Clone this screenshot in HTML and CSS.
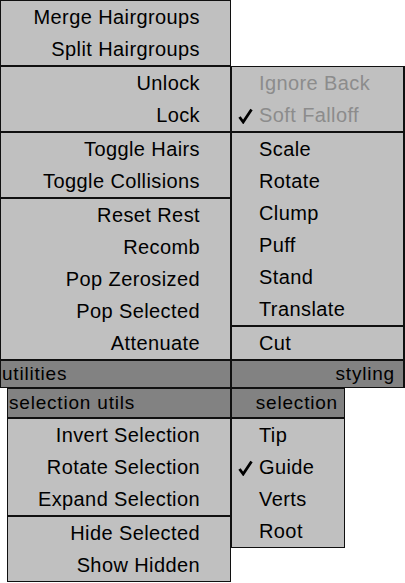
FILE: index.html
```html
<!DOCTYPE html>
<html>
<head>
<meta charset="utf-8">
<link rel="stylesheet" href="styles.css">
</head>
<body>
<div class="top">
  <div class="col-left">
    <div class="sec">
      <div class="item">Merge Hairgroups</div>
      <div class="item">Split Hairgroups</div>
    </div>
    <div class="sec">
      <div class="item">Unlock</div>
      <div class="item">Lock</div>
    </div>
    <div class="sec">
      <div class="item">Toggle Hairs</div>
      <div class="item">Toggle Collisions</div>
    </div>
    <div class="sec">
      <div class="item">Reset Rest</div>
      <div class="item">Recomb</div>
      <div class="item">Pop Zerosized</div>
      <div class="item">Pop Selected</div>
      <div class="item">Attenuate</div>
    </div>
  </div>
  <div class="col-right">
    <div class="sec r">
      <div class="ritem disabled"><span class="mark"></span>Ignore Back</div>
      <div class="ritem disabled"><span class="mark"><svg width="15" height="16" viewBox="0 0 15 16"><path d="M1.5 9 L5.2 14 L13.5 1.5" fill="none" stroke="#000" stroke-width="2.8" stroke-linejoin="miter"/></svg></span>Soft Falloff</div>
    </div>
    <div class="sec r">
      <div class="ritem"><span class="mark"></span>Scale</div>
      <div class="ritem"><span class="mark"></span>Rotate</div>
      <div class="ritem"><span class="mark"></span>Clump</div>
      <div class="ritem"><span class="mark"></span>Puff</div>
      <div class="ritem"><span class="mark"></span>Stand</div>
      <div class="ritem"><span class="mark"></span>Translate</div>
    </div>
    <div class="sec r">
      <div class="ritem"><span class="mark"></span>Cut</div>
    </div>
  </div>
</div>
<div class="bars">
  <div class="bar bar-left">utilities</div>
  <div class="bar bar-right">styling</div>
</div>
<div class="bottom">
  <div class="sub-left">
    <div class="bar sbar-left">selection utils</div>
    <div class="sec">
      <div class="item">Invert Selection</div>
      <div class="item">Rotate Selection</div>
      <div class="item">Expand Selection</div>
    </div>
    <div class="sec">
      <div class="item">Hide Selected</div>
      <div class="item">Show Hidden</div>
    </div>
  </div>
  <div class="sub-right">
    <div class="bar sbar-right">selection</div>
    <div class="sec">
      <div class="ritem"><span class="mark"></span>Tip</div>
      <div class="ritem"><span class="mark"><svg width="15" height="16" viewBox="0 0 15 16"><path d="M1.5 9 L5.2 14 L13.5 1.5" fill="none" stroke="#000" stroke-width="2.8" stroke-linejoin="miter"/></svg></span>Guide</div>
      <div class="ritem"><span class="mark"></span>Verts</div>
      <div class="ritem"><span class="mark"></span>Root</div>
    </div>
  </div>
</div>
</body>
</html>
```

FILE: styles.css
```css
html, body {
  margin: 0;
  padding: 0;
  background: #ffffff;
}
body {
  width: 405px;
  height: 583px;
  overflow: hidden;
  font-family: "Liberation Sans", Arial, sans-serif;
  color: #000;
}
.top {
  display: flex;
  align-items: flex-start;
}
.col-left {
  width: 231px;
  display: flex;
  flex-direction: column;
}
.col-right {
  width: 174px;
  margin-top: 66px;
  display: flex;
  flex-direction: column;
}
.sec {
  background: #c0c0c0;
  border: 1px solid #101010;
}
.sec.r {
  border-right-width: 2px;
}
.item {
  height: 32px;
  line-height: 32px;
  font-size: 20px;
  letter-spacing: 0.4px;
  text-align: right;
  padding-right: 30px;
  white-space: nowrap;
}
.ritem {
  height: 32px;
  font-size: 20px;
  letter-spacing: 0.4px;
  display: flex;
  align-items: center;
  white-space: nowrap;
}
.ritem.disabled {
  color: #8c8c8c;
}
.mark {
  width: 27px;
  height: 32px;
  display: flex;
  align-items: center;
  justify-content: flex-start;
  padding-left: 6px;
  box-sizing: border-box;
  flex: none;
}
.mark svg {
  margin-top: 1px;
}
.bars {
  display: flex;
}
.bar {
  background: #828282;
  border: 1px solid #101010;
  font-family: "Liberation Sans", Arial, sans-serif;
  font-size: 19px;
  letter-spacing: 0.8px;
  display: flex;
  align-items: center;
  white-space: nowrap;
  box-sizing: border-box;
}
.bar-left {
  width: 231px;
  height: 28px;
  padding-left: 1px;
}
.bar-right {
  width: 174px;
  height: 28px;
  border-right-width: 2px;
  justify-content: flex-end;
  padding-right: 8px;
}
.bottom {
  display: flex;
  align-items: flex-start;
  padding-left: 7px;
}
.sub-left {
  width: 224px;
  display: flex;
  flex-direction: column;
}
.sub-right {
  width: 114px;
  display: flex;
  flex-direction: column;
}
.sbar-left {
  height: 30px;
  padding-left: 1px;
}
.sbar-right {
  height: 30px;
  justify-content: flex-end;
  padding-right: 6px;
}
```
